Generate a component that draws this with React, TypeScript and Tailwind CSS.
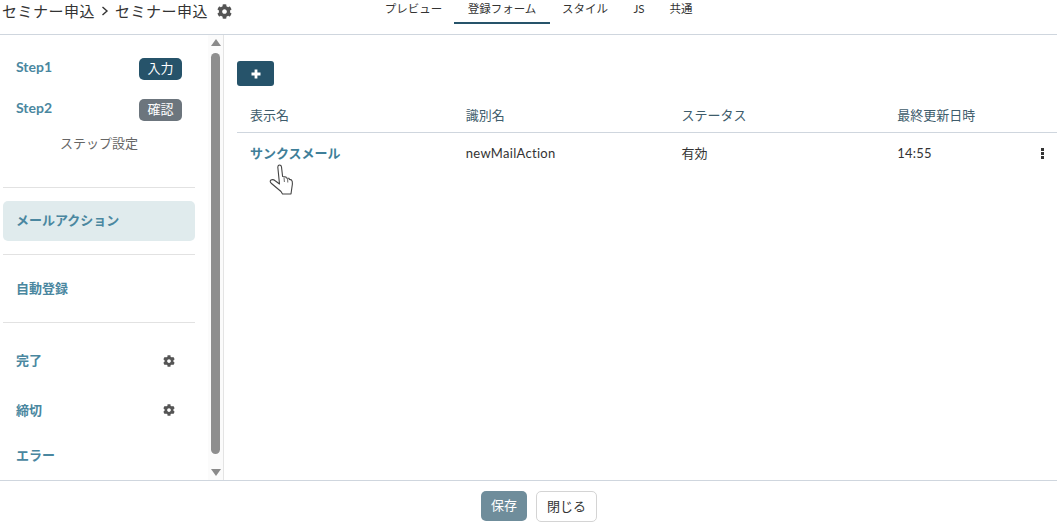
const FONT = "font-['Lato','Noto_Sans_CJK_JP',sans-serif]";

function Gear({ className = "" }: { className?: string }) {
  return (
    <svg viewBox="0 0 512 512" className={className} fill="currentColor">
      <path d="M487.4 315.7l-42.6-24.6c4.3-23.2 4.3-47 0-70.2l42.6-24.6c4.9-2.8 7.1-8.6 5.5-14-11.1-35.6-30-67.8-54.7-94.6-3.8-4.1-10-5.1-14.8-2.3L380.8 110c-17.9-15.4-38.5-27.3-60.8-35.1V25.8c0-5.6-3.9-10.5-9.4-11.7-36.7-8.2-74.3-7.8-109.2 0-5.5 1.2-9.4 6.1-9.4 11.7V75c-22.2 7.9-42.8 19.8-60.8 35.1L88.7 85.5c-4.9-2.8-11-1.9-14.8 2.3-24.7 26.7-43.6 58.9-54.7 94.6-1.7 5.4.6 11.2 5.5 14L67.3 221c-4.3 23.2-4.3 47 0 70.2l-42.6 24.6c-4.9 2.8-7.1 8.6-5.5 14 11.1 35.6 30 67.8 54.7 94.6 3.8 4.1 10 5.1 14.8 2.3l42.6-24.6c17.9 15.4 38.5 27.3 60.8 35.1v49.2c0 5.6 3.9 10.5 9.4 11.7 36.7 8.2 74.3 7.8 109.2 0 5.5-1.2 9.4-6.1 9.4-11.7v-49.2c22.2-7.9 42.8-19.8 60.8-35.1l42.6 24.6c4.9 2.8 11 1.9 14.8-2.3 24.7-26.7 43.6-58.9 54.7-94.6 1.5-5.5-.7-11.3-5.6-14.1zM256 336c-44.1 0-80-35.9-80-80s35.9-80 80-80 80 35.9 80 80-35.9 80-80 80z" />
    </svg>
  );
}

function Hand() {
  return (
    <svg width="28" height="32" viewBox="0 0 28 32" className="absolute left-[31px] top-[31px]" fill="#fff" stroke="#444" strokeWidth="1.1" strokeLinejoin="round">
      <path d="M11.5 20 L9.8 3 Q10 1 11.5 1 Q13.3 1 13.5 3 L14.6 12.5 L18 13 L18.4 14 L21 14.3 L21.4 15.4 L23.4 15.9 Q24.6 17 24.4 20 L23.4 27 L23 30 L14.5 30 L13 27.5 L3.5 19.5 Q1.2 17.5 3 16 Q5 15 7.5 17 Z" />
      <path d="M16 13.5 L16.4 18 M19.6 14.6 L19.8 18.5" fill="none" strokeWidth="0.8" />
    </svg>
  );
}

function Divider() {
  return <div className="ml-[3px] h-px w-[192px] bg-[#e2e2e2]" />;
}

function SideLabel({ children, className = "" }: { children: React.ReactNode; className?: string }) {
  return <span className={`text-[13px] font-bold text-[#4a87a0] ${className}`}>{children}</span>;
}

function StepRow({ name, badge, bg }: { name: string; badge: string; bg: string }) {
  return (
    <div className="flex h-[22px] items-center justify-between pl-4 pr-[26px]">
      <span className="-mt-[6px] text-[14px] font-bold text-[#4a87a0]">{name}</span>
      <span className={`flex h-[22px] w-[43px] items-center justify-center rounded-[5px] text-[13px] text-white ${bg}`}>{badge}</span>
    </div>
  );
}

function Tab({ label, active, className = "" }: { label: string; active?: boolean; className?: string }) {
  return (
    <div className={`flex h-[24px] items-start justify-center border-b-2 pt-[2px] text-[11.5px] leading-[14px] text-[#333] ${active ? "border-[#26536a]" : "border-transparent"} ${className}`}>
      {label}
    </div>
  );
}

function Cell({ children, className = "" }: { children?: React.ReactNode; className?: string }) {
  return <div className={`w-[215.75px] shrink-0 pl-[13px] ${className}`}>{children}</div>;
}

export default function App() {
  return (
    <div className={`flex h-[526px] w-[1057px] flex-col overflow-hidden bg-white ${FONT}`}>
      <header className="relative flex h-[35px] shrink-0 border-b border-[#cfd6de]">
        <div className="flex h-[22px] items-center pl-[2px] text-[15px] tracking-[0.5px] text-[#333]">
          <span>セミナー申込</span>
          <svg width="8" height="10" viewBox="0 0 8 10" className="mx-[6px]" fill="none" stroke="#333" strokeWidth="1.4"><path d="M1.5 1 L6 5 L1.5 9" /></svg>
          <span>セミナー申込</span>
          <Gear className="ml-[9px] h-[15px] w-[15px] text-[#555]" />
        </div>
        <nav className="absolute left-[373px] top-0 flex">
          <Tab label="プレビュー" className="w-[81px]" />
          <Tab label="登録フォーム" active className="w-[96px]" />
          <Tab label="スタイル" className="w-[70px]" />
          <Tab label="JS" className="w-[38px]" />
          <Tab label="共通" className="w-[46px]" />
        </nav>
      </header>

      <div className="flex min-h-0 flex-1">
        <aside className="flex w-[224px] shrink-0 border-r border-[#e4e4e4]">
          <div className="w-[208px] shrink-0 pt-[23px]">
            <div className="flex flex-col gap-[19px]">
              <StepRow name="Step1" badge="入力" bg="bg-[#26536a]" />
              <StepRow name="Step2" badge="確認" bg="bg-[#6c757d]" />
            </div>
            <div className="mt-[12px] h-[20px] w-[195px] pl-[3px] text-center text-[13px] leading-[20px] text-[#666]">ステップ設定</div>
            <div className="mt-[34px]"><Divider /></div>
            <div className="ml-[3px] mt-[13px] flex h-[40px] w-[192px] items-center rounded-[5px] bg-[#e0ebed] pb-[1px] pl-[13px]">
              <SideLabel>メールアクション</SideLabel>
            </div>
            <div className="mt-[13px]"><Divider /></div>
            <div className="flex h-[67px] items-center pl-4"><SideLabel>自動登録</SideLabel></div>
            <Divider />
            <div className="flex h-[75px] items-center justify-between pl-4 pr-[33px]">
              <SideLabel>完了</SideLabel>
              <Gear className="mt-[1px] h-3 w-3 text-[#555]" />
            </div>
            <div className="flex h-[26px] items-center justify-between pl-4 pr-[33px]">
              <SideLabel>締切</SideLabel>
              <Gear className="-mt-[2px] h-3 w-3 text-[#555]" />
            </div>
            <div className="mt-[22px] flex h-[20px] items-center pl-4"><SideLabel>エラー</SideLabel></div>
          </div>
          <div className="flex w-[15px] flex-col items-center bg-[#fbfbfb] pt-[4px]">
            <div className="h-0 w-0 border-x-[5px] border-b-[7px] border-x-transparent border-b-[#8a8a8a]" />
            <div className="mt-[7px] h-[401px] w-[9px] rounded-full bg-[#8e8e8e]" />
            <div className="mt-[15px] h-0 w-0 border-x-[5px] border-t-[7px] border-x-transparent border-t-[#8a8a8a]" />
          </div>
        </aside>

        <main className="min-w-0 flex-1 pl-[13px] pt-[26px]">
          <button className="flex h-[25px] w-[37px] items-center justify-center rounded-[3px] bg-[#26536a]">
            <svg width="10" height="10" viewBox="0 0 10 10" fill="#fff"><path d="M3.6 .5h2.8v3.1h3.1v2.8H6.4v3.1H3.6V6.4H.5V3.6h3.1z" /></svg>
          </button>
          <div className="mt-[13px] flex h-[34px] items-center border-b border-[#cfd6de] text-[13px] text-[#3e5c6b]">
            <Cell>表示名</Cell>
            <Cell>識別名</Cell>
            <Cell>ステータス</Cell>
            <Cell>最終更新日時</Cell>
          </div>
          <div className="relative flex h-[42px] items-center text-[13px] text-[#333]">
            <Cell className="font-bold text-[#3f7f99]">サンクスメール</Cell>
            <Cell className="tracking-[0.3px]">newMailAction</Cell>
            <Cell>有効</Cell>
            <Cell className="tracking-[0.2px]">14:55</Cell>
            <div className="absolute left-[804px] top-[15px] flex flex-col gap-[1.5px]">
              <span className="h-[2.5px] w-[3px] bg-[#333]" />
              <span className="h-[2.5px] w-[3px] bg-[#333]" />
              <span className="h-[2.5px] w-[3px] bg-[#333]" />
            </div>
            <Hand />
          </div>
        </main>
      </div>

      <footer className="flex h-[46px] shrink-0 items-start justify-center gap-[9px] border-t border-[#cfd6de] pl-[21px] pt-[10px]">
        <button className="h-[30px] w-[46px] rounded-[5px] bg-[#6f8d9b] text-[13px] text-white">保存</button>
        <button className="h-[31px] w-[61px] rounded-[5px] border border-[#d4d4d4] bg-white text-[13px] text-[#333]">閉じる</button>
      </footer>
    </div>
  );
}
